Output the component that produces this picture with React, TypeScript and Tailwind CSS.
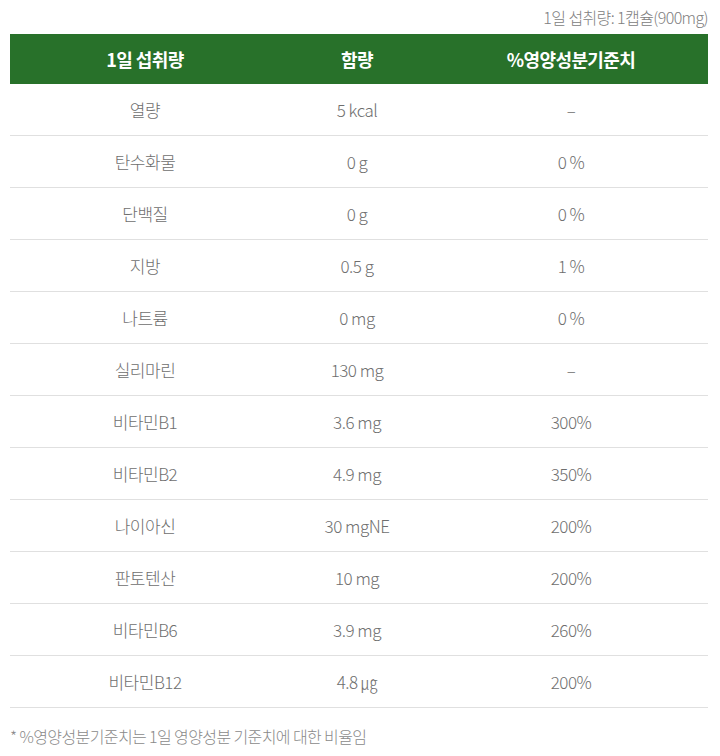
import React from 'react';

type Row = { name: string; amount: string; ratio: string };

const rows: Row[] = [
  { name: '열량', amount: '5 kcal', ratio: '–' },
  { name: '탄수화물', amount: '0 g', ratio: '0 %' },
  { name: '단백질', amount: '0 g', ratio: '0 %' },
  { name: '지방', amount: '0.5 g', ratio: '1 %' },
  { name: '나트륨', amount: '0 mg', ratio: '0 %' },
  { name: '실리마린', amount: '130 mg', ratio: '–' },
  { name: '비타민B1', amount: '3.6 mg', ratio: '300%' },
  { name: '비타민B2', amount: '4.9 mg', ratio: '350%' },
  { name: '나이아신', amount: '30 mgNE', ratio: '200%' },
  { name: '판토텐산', amount: '10 mg', ratio: '200%' },
  { name: '비타민B6', amount: '3.9 mg', ratio: '260%' },
  { name: '비타민B12', amount: '4.8 ㎍', ratio: '200%' },
];

const font = { fontFamily: '"Noto Sans CJK KR", "Noto Sans", sans-serif' };

const App: React.FC = () => {
  return (
    <div className="w-[720px] h-[756px] bg-white overflow-hidden" style={font}>
      <div className="pl-[10px] pr-[12px]">
        <div className="h-[34px] flex items-center justify-end text-[16px] font-light text-[#808080] tracking-[-0.6px]">
          1일 섭취량: 1캡슐(900mg)
        </div>
        <div className="grid grid-cols-[270px_154px_1fr] h-[50px] bg-[#28712a] text-white text-[18px] font-bold items-center text-center tracking-[-0.6px]">
          <div>1일 섭취량</div>
          <div>함량</div>
          <div>%영양성분기준치</div>
        </div>
        {rows.map((r) => (
          <div
            key={r.name}
            className="grid grid-cols-[270px_154px_1fr] h-[52px] items-center text-center text-[17px] font-light text-[#6e6e6e] border-b border-[#e0e0e0] tracking-[-0.5px]"
          >
            <div>{r.name}</div>
            <div>{r.amount}</div>
            <div>{r.ratio}</div>
          </div>
        ))}
        <div className="mt-[16px] text-[16px] font-light text-[#8a8a8a] tracking-[-0.6px]">
          * %영양성분기준치는 1일 영양성분 기준치에 대한 비율임
        </div>
      </div>
    </div>
  );
};

export default App;
